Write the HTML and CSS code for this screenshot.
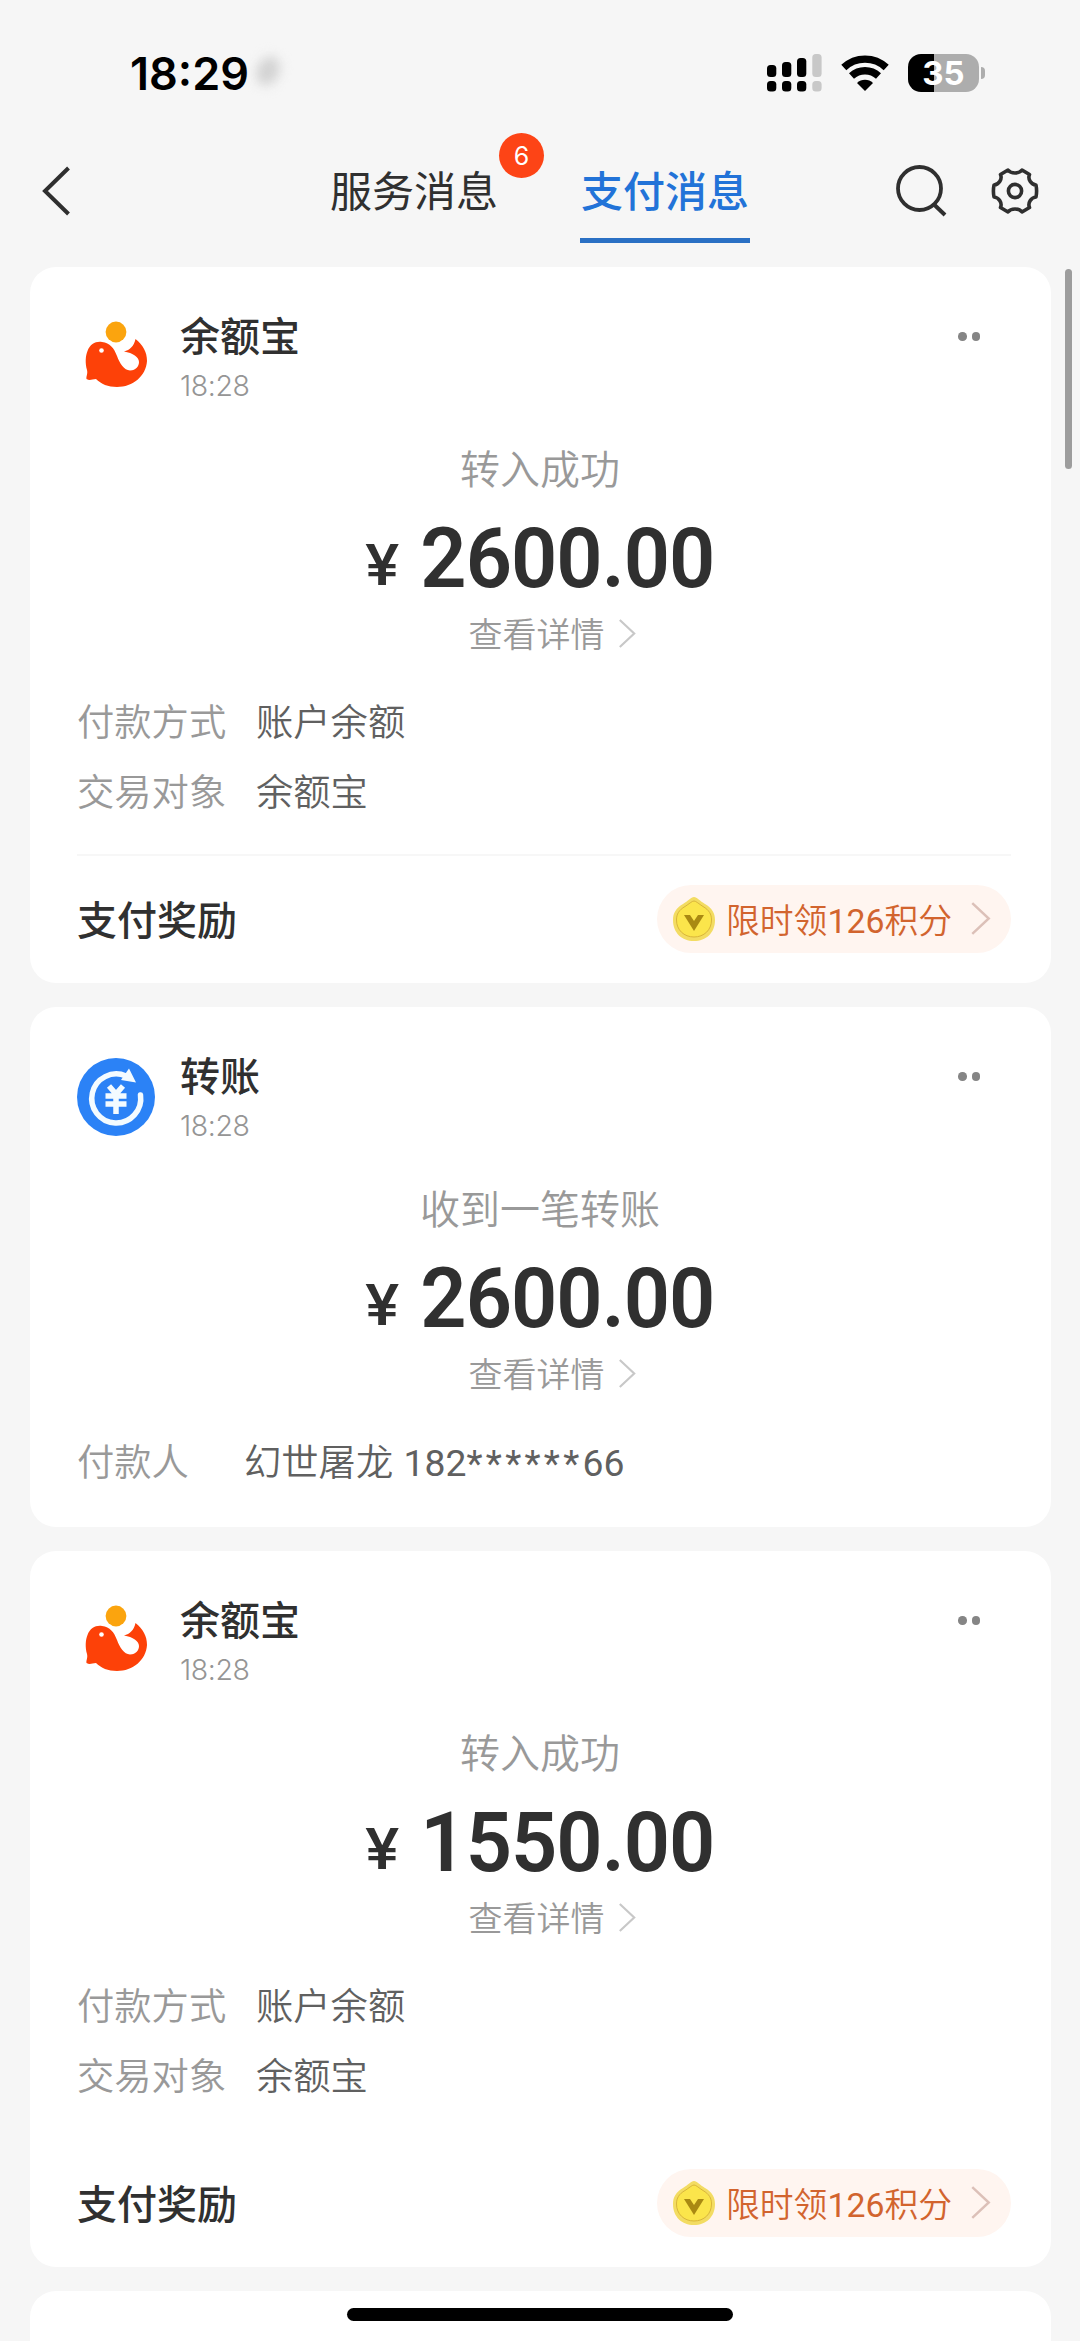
FILE: index.html
```html
<!DOCTYPE html>
<html lang="zh-CN">
<head>
<meta charset="utf-8">
<title>支付消息</title>
<link rel="stylesheet" href="styles.css">
</head>
<body>
<svg class="sprite" aria-hidden="true">
  <symbol id="whale" viewBox="0 0 78 78">
    <circle cx="39" cy="14" r="10.400" fill="#fba40e"/>
    <path fill="#fd4108" d="M9.500 61C9 58 11 56 10 52C8 45 8.500 38 10.500 33C13 26 19 23 25 24C33 25 37 30 40 38C43 46 47 52 53 52.500C59 52.500 62 48 62 44C62 39 56 35 47 33.500C53 32 57 28 58.500 21C66 27 70 34 70 43C69 58 56 69 40 69C31 69 24 66 19 61C15 61 13 63 9.500 61Z"/>
    <circle cx="24.500" cy="32.500" r="2.300" fill="#fff"/>
  </symbol>
  <symbol id="transfer" viewBox="0 0 78 78">
    <circle cx="39" cy="39" r="39" fill="#2b82f6"/>
    <path d="M63.500 37A24.500 24.500 0 1 1 49 18" fill="none" stroke="#f3fbff" stroke-width="5.500" stroke-linecap="round"/>
    <path d="M52 10.500L59 24.500L44 22Z" fill="#f3fbff"/>
    <path d="M32 28L39 36L46 28M28.500 38H49.500M28.500 46H49.500M39 36V56" fill="none" stroke="#f3fbff" stroke-width="5.500"/>
  </symbol>
  <symbol id="coin" viewBox="0 0 44 46">
    <path fill="#f3dc62" d="M22 1C25 1 28 5 33 8C40 12 43 17 43 24C43 37 34 45 22 45C10 45 1 37 1 24C1 17 4 12 11 8C16 5 19 1 22 1Z"/>
    <path fill="#fbe54b" stroke="#d9b53a" stroke-width="1" d="M22 5C24 5 27 8 31 10.500C37 14 39.500 18 39.500 24C39.500 34 32 41 22 41C12 41 4.500 34 4.500 24C4.500 18 7 14 13 10.500C17 8 20 5 22 5Z"/>
    <path fill="#a98912" d="M12 19H18L22 25L26 19H32L22 35Z"/>
  </symbol>
  <symbol id="chevron" viewBox="0 0 20 34">
    <path d="M2 2L18 17L2 32" fill="none" stroke="currentColor" stroke-width="2.400"/>
  </symbol>
</svg>

<header class="top">
  <div class="status">
    <div class="clock">18:29<span class="smudge"></span></div>
    <div class="indicators">
      <svg class="signal" viewBox="0 0 55 38">
        <g fill="#000"><rect x="0" y="11" width="9.300" height="12" rx="3.500"/><rect x="15" y="8" width="9.300" height="15" rx="3.500"/><rect x="30" y="4" width="9.300" height="19" rx="3.500"/><rect x="0" y="27" width="9.300" height="10.500" rx="3.500"/><rect x="15" y="27" width="9.300" height="10.500" rx="3.500"/><rect x="30" y="27" width="9.300" height="10.500" rx="3.500"/></g>
        <g fill="#c8c8c8"><rect x="45.300" y="0" width="9.300" height="23" rx="3.500"/><rect x="45.300" y="27" width="9.300" height="10.500" rx="3.500"/></g>
      </svg>
      <svg class="wifi" viewBox="0 0 48 38">
        <path d="M2.800 13.500A31 31 0 0 1 45.200 13.500M10.500 22A20 20 0 0 1 37.500 22" fill="none" stroke="#000" stroke-width="7.400"/>
        <path d="M16 29A11.500 11.500 0 0 1 32 29L24 37Z"/>
      </svg>
      <div class="battery"><span>35</span></div>
      <div class="nub"></div>
    </div>
  </div>
  <nav class="nav">
    <svg class="back" viewBox="0 0 30 50"><path d="M27.500 2L4 25L27.500 48" fill="none" stroke="#2f2f2f" stroke-width="4"/></svg>
    <div class="tabs">
      <div class="tab">服务消息<span class="badge">6</span></div>
      <div class="tab active">支付消息</div>
    </div>
    <div class="tools">
      <svg class="search" viewBox="0 0 52 52"><circle cx="24.500" cy="23.500" r="21.500" fill="none" stroke="#2f2f2f" stroke-width="3.800"/><path d="M38.500 39L50 50" stroke="#2f2f2f" stroke-width="4"/></svg>
      <svg class="gear" viewBox="0 0 50 50" fill="none" stroke="#2f2f2f" stroke-width="3.600" stroke-linejoin="round">
        <circle cx="25" cy="25" r="6.600"/>
        <path d="M18 4C21 8 29 8 32 4L39.500 8.500C37.500 13 41 18.500 46 19C46.800 23 46.800 27 46 31C41 31.500 37.500 37 39.500 41.500L32 46C29 42 21 42 18 46L10.500 41.500C12.500 37 9 31.500 4 31C3.200 27 3.200 23 4 19C9 18.500 12.500 13 10.500 8.500Z"/>
      </svg>
    </div>
  </nav>
</header>

<main class="feed">
  <article class="card">
    <div class="head">
      <svg class="avatar"><use href="#whale"/></svg>
      <div class="who"><h2>余额宝</h2><time>18:28</time></div>
      <div class="more"><i></i><i></i></div>
    </div>
    <div class="summary">
      <p class="state">转入成功</p>
      <p class="amount"><span>¥</span><b>2600.00</b></p>
      <p class="view">查看详情<svg><use href="#chevron"/></svg></p>
    </div>
    <dl class="facts">
      <dt>付款方式</dt><dd>账户余额</dd>
      <dt>交易对象</dt><dd>余额宝</dd>
    </dl>
    <div class="reward">
      <strong>支付奖励</strong>
      <div class="pill"><svg class="coin"><use href="#coin"/></svg><span class="offer">限时领<span class="num">126</span>积分</span><svg class="go"><use href="#chevron"/></svg></div>
    </div>
  </article>

  <article class="card brief">
    <div class="head">
      <svg class="avatar"><use href="#transfer"/></svg>
      <div class="who"><h2>转账</h2><time>18:28</time></div>
      <div class="more"><i></i><i></i></div>
    </div>
    <div class="summary">
      <p class="state">收到一笔转账</p>
      <p class="amount"><span>¥</span><b>2600.00</b></p>
      <p class="view">查看详情<svg><use href="#chevron"/></svg></p>
    </div>
    <dl class="facts payer">
      <dt>付款人</dt><dd>幻世屠龙 <span class="num">182<span class="stars">******</span>66</span></dd>
    </dl>
  </article>

  <article class="card">
    <div class="head">
      <svg class="avatar"><use href="#whale"/></svg>
      <div class="who"><h2>余额宝</h2><time>18:28</time></div>
      <div class="more"><i></i><i></i></div>
    </div>
    <div class="summary">
      <p class="state">转入成功</p>
      <p class="amount"><span>¥</span><b>1550.00</b></p>
      <p class="view">查看详情<svg><use href="#chevron"/></svg></p>
    </div>
    <dl class="facts">
      <dt>付款方式</dt><dd>账户余额</dd>
      <dt>交易对象</dt><dd>余额宝</dd>
    </dl>
    <div class="reward plain">
      <strong>支付奖励</strong>
      <div class="pill"><svg class="coin"><use href="#coin"/></svg><span class="offer">限时领<span class="num">126</span>积分</span><svg class="go"><use href="#chevron"/></svg></div>
    </div>
  </article>

  <article class="card peek"></article>
</main>
<div class="scrollbar"></div>
<div class="home"></div>
</body>
</html>
```

FILE: styles.css
```css
* { box-sizing: border-box; margin: 0; padding: 0; }
body {
  position: relative;
  height: 2341px;
  overflow: hidden;
  background: #f6f6f6;
  color: #303030;
  font-family: "Noto Sans CJK SC", sans-serif;
}
svg { display: block; flex: none; }
.sprite { position: absolute; width: 0; height: 0; }

.top { height: 267px; }
.status {
  height: 145px;
  padding: 0 95px 0 130px;
  display: flex;
  justify-content: space-between;
}
.clock {
  display: flex;
  align-items: center;
  height: 148px;
  color: #000;
  font: 600 45px/54px Inter, sans-serif;
}
.smudge {
  width: 22px;
  height: 30px;
  margin-left: 8px;
  margin-top: -6px;
  border-radius: 50%;
  background: #d2d2d2;
  filter: blur(6px);
  transform: rotate(25deg);
}
.indicators { display: flex; align-items: center; height: 145px; }
.signal { width: 55px; height: 38px; }
.wifi { width: 48px; height: 38px; margin-left: 19px; }
.battery {
  width: 71px;
  height: 38px;
  margin-left: 19px;
  border-radius: 13px;
  background: linear-gradient(90deg, #000 25.5px, #adadad 25.5px);
  color: #fff;
  font: 700 33px/38px Inter, sans-serif;
  text-align: center;
}
.nub { width: 4px; height: 12px; margin-left: 2px; border-radius: 0 4px 4px 0; background: #adadad; }

.nav {
  height: 100px;
  padding: 0 40px 0 41px;
  display: flex;
  align-items: flex-start;
}
.back { width: 30px; height: 50px; margin-top: 21px; }
.tabs { display: flex; gap: 81px; margin-left: 258px; }
.tab {
  position: relative;
  width: 170px;
  height: 98px;
  padding-top: 14px;
  font-size: 42px;
  line-height: 60px;
  text-align: center;
  white-space: nowrap;
}
.active { color: #2273d8; font-weight: 500; border-bottom: 5px solid #2a70c4; }
.badge {
  position: absolute;
  left: 170px;
  top: -12px;
  width: 45px;
  height: 45px;
  border-radius: 50%;
  background: #fd4416;
  color: #fff;
  font: 400 25px/46px Inter, sans-serif;
}
.tools { display: flex; margin: 20px 0 0 auto; gap: 43px; }
.search { width: 52px; height: 52px; }
.gear { width: 50px; height: 50px; margin-top: 1px; }

.feed { padding: 0 29px 0 30px; display: flex; flex-direction: column; gap: 24px; }
.card {
  flex: none;
  height: 716px;
  padding: 42px 40px 0 47px;
  border-radius: 26px;
  background: #fff;
}
.brief { height: 520px; }
.peek { height: 50px; border-radius: 26px 26px 0 0; }
.head { display: flex; height: 96px; }
.avatar { width: 78px; height: 78px; margin-top: 9px; }
.who { margin-left: 25px; }
.who h2 { height: 50px; font-size: 40px; font-weight: 500; line-height: 50px; }
.who time { display: block; color: #959595; font: 300 28.500px/34px Inter, sans-serif; margin-top: 10px; letter-spacing: -0.4px; }
.more { display: flex; gap: 5px; margin: 23px 31px 0 auto; }
.more i { width: 8.500px; height: 8.500px; border-radius: 50%; background: #858585; }

.summary { margin: 37px 8px 0 0; text-align: center; }
.state { color: #999; font-size: 40px; font-weight: 350; line-height: 50px; }
.amount {
  display: flex;
  justify-content: center;
  align-items: baseline;
  gap: 17px;
  height: 104px;
  margin-top: 15px;
  padding-left: 7px;
  font-family: Roboto, sans-serif;
  line-height: 104px;
}
.amount span { font-size: 57px; font-weight: 500; transform: translateY(-2px) scaleX(1.12); }
.amount b { font-size: 84px; font-weight: 600; letter-spacing: -1px; transform: scaleX(0.965); }
.view {
  display: flex;
  justify-content: center;
  align-items: center;
  gap: 13px;
  padding-left: 24px;
  color: #999;
  font-size: 34px;
  font-weight: 350;
  line-height: 44px;
}
.view svg { width: 18px; height: 31px; color: #c8c8c8; }

.facts {
  display: grid;
  grid-template-columns: 179px 1fr;
  grid-auto-rows: 70px;
  margin-top: 30px;
  font-size: 37.300px;
  font-weight: 350;
  line-height: 70px;
}
.facts dt { color: #999; }
.facts dd { color: #606060; word-spacing: 2px; }
.num { font-family: Roboto, sans-serif; font-weight: 400; line-height: 1; }
.payer { grid-template-columns: 167px 1fr; }
.stars { letter-spacing: 3.300px; }

.reward {
  display: flex;
  justify-content: space-between;
  align-items: center;
  height: 127px;
  margin-top: 29px;
  border-top: 2px solid #f7f7f7;
}
.plain { border-top-color: #fff; }
.reward strong { font-size: 40px; font-weight: 500; margin-top: -2px; }
.pill {
  display: flex;
  align-items: center;
  width: 354px;
  height: 68px;
  padding-left: 15px;
  border-radius: 34px;
  background: #fff5f0;
  color: #d2642e;
  font-size: 33.800px;
  font-weight: 350;
  line-height: 60px;
}
.offer { margin-left: 10px; white-space: nowrap; }
.coin { width: 44px; height: 46px; }
.go { width: 21px; height: 35px; margin-left: 18px; color: #dcc0b8; }

.scrollbar { position: absolute; left: 1065px; top: 269px; width: 7px; height: 200px; border-radius: 4px; background: #9d9d9d; }
.home { position: absolute; left: 347px; top: 2308px; width: 386px; height: 13px; border-radius: 7px; background: #000; }
```
